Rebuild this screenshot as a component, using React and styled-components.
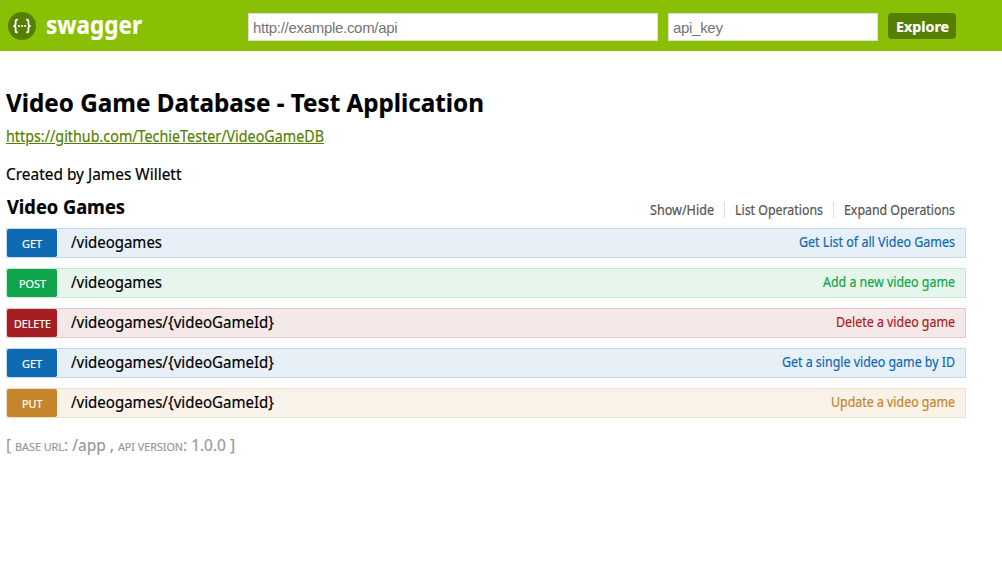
import React, { useLayoutEffect, useRef, useState } from "react";
import styled, { createGlobalStyle } from "styled-components";

const GlobalStyle = createGlobalStyle`
  * { box-sizing: border-box; }
  body { margin: 0; background: #fff; color: #000; font-family: "Droid Sans", "Noto Sans", sans-serif; }
  h1, h2, p, ul { margin: 0; padding: 0; }
  a { text-decoration: none; color: inherit; }
`;

const FitBox = styled.span`
  display: inline-block;
  width: ${(p) => p.$w}px;
  white-space: nowrap;
  text-align: left;
  text-decoration: inherit;
  vertical-align: baseline;
`;
const FitText = styled.span`
  display: inline-block;
  transform-origin: 0 50%;
  text-decoration: inherit;
  -webkit-text-stroke: 0.2px currentColor;
`;

// Condenses a text run horizontally so that it fills exactly w pixels.
function Fit({ w, children }) {
  const ref = useRef(null);
  const [scale, setScale] = useState(1);
  useLayoutEffect(() => {
    const natural = parseFloat(getComputedStyle(ref.current).width);
    if (natural) setScale(w / natural);
  }, [w, children]);
  return (
    <FitBox $w={w}>
      <FitText ref={ref} style={{ transform: `scaleX(${scale})` }}>
        {children}
      </FitText>
    </FitBox>
  );
}

const Header = styled.header`
  display: flex;
  align-items: flex-start;
  height: 51px;
  padding: 13px 46px 0 8px;
  background: #89bf04;
`;
const Brand = styled.a`
  display: flex;
  align-items: flex-start;
  width: 240px;
  height: 26px;
  gap: 10px;
`;
const BrandLogo = styled.svg`
  flex: none;
  margin-top: -1px;
`;
const BrandName = styled.span`
  margin-top: -1px;
  font-size: 25px;
  line-height: 24px;
  font-weight: 700;
  color: #fff;
`;
const Field = styled.input`
  width: ${(p) => p.$width}px;
  height: 28px;
  margin: 0 10px 0 0;
  padding: 0 4px;
  border: 1px solid #e0dede;
  outline: none;
  border-radius: 0;
  background: #fff;
  font: 15px "Liberation Sans", Arial, sans-serif;
  letter-spacing: -0.3px;
  &::placeholder { color: #757575; }
`;
const ExploreButton = styled.button`
  width: 68px;
  height: 26px;
  padding: 0 0 1px;
  border: 0;
  border-radius: 4px;
  background: #547f00;
  color: #fff;
  font: 700 15px/24px "Droid Sans", "Noto Sans", sans-serif;
  white-space: nowrap;
`;
const Main = styled.main`
  padding: 34px 36px 0 6px;
  white-space: nowrap;
`;
const Title = styled.h1`
  font-size: 25px;
  line-height: 34px;
  font-weight: 700;
`;
const RepoLink = styled.a`
  display: block;
  width: max-content;
  margin-top: 6px;
  font-size: 16px;
  line-height: 22px;
  && { color: #547f00; text-decoration: underline; }
`;
const Author = styled.p`
  margin-top: 16px;
  font-size: 16px;
  line-height: 22px;
`;
const ResourceHead = styled.div`
  display: flex;
  justify-content: space-between;
  height: 43px;
  padding: 8px 0 0 1px;
`;
const ResourceName = styled.h2`
  font-size: 19px;
  line-height: 28px;
`;
const Options = styled.ul`
  display: flex;
  list-style: none;
  padding: 9px 11px 0 0;
`;
const Option = styled.li`
  height: 16px;
  font-size: 13.5px;
  line-height: 16px;
  color: #555;
  & + & { margin-left: 10px; padding-left: 10px; border-left: 1px solid #ddd; }
`;
const Operations = styled.div`
  display: flex;
  flex-direction: column;
  gap: 10px;
`;
const Operation = styled.div`
  display: flex;
  height: 30px;
  border: 1px solid ${(p) => p.$c.border};
  background: ${(p) => p.$c.bg};
`;
const Method = styled.span`
  width: 50px;
  height: 28px;
  border-radius: 2px;
  background: ${(p) => p.$c.main};
  color: #fff;
  font-size: 11.3px;
  line-height: 30px;
  text-align: center;
`;
const Path = styled.span`
  flex: 1;
  padding-left: 14px;
  font-size: 16px;
  line-height: 26px;
`;
const Summary = styled.span`
  padding-right: 10px;
  font-size: 13.5px;
  line-height: 26px;
  color: ${(p) => p.$c.main};
`;
const Footer = styled.footer`
  display: flex;
  align-items: baseline;
  margin-top: 15px;
  font-size: 16px;
  line-height: 24px;
  color: #999;
`;
const SmallCaps = styled.span`
  margin: 0 0 0 4px;
  font-size: 11.5px;
  text-transform: uppercase;
`;

const tones = {
  get: { main: "#0f6ab4", bg: "#e7f0f7", border: "#c3d9ec" },
  post: { main: "#10a54a", bg: "#e7f6ec", border: "#c3e8d1" },
  delete: { main: "#a41e22", bg: "#f5e8e8", border: "#e8c6c7" },
  put: { main: "#c5862b", bg: "#f9f2e9", border: "#f0e0ca" },
};
const labelWidths = { get: 20, post: 27, delete: 37, put: 20.5 };
const operations = [
  ["get", "/videogames", 91, "Get List of all Video Games", 156],
  ["post", "/videogames", 91, "Add a new video game", 132],
  ["delete", "/videogames/{videoGameId}", 203, "Delete a video game", 119],
  ["get", "/videogames/{videoGameId}", 203, "Get a single video game by ID", 173],
  ["put", "/videogames/{videoGameId}", 203, "Update a video game", 124],
];

function Logo() {
  return (
    <BrandLogo width="28" height="28" viewBox="0 0 28 28">
      <circle cx="14" cy="14" r="14" fill="#547f00" />
      <g fill="none" stroke="#fff" strokeWidth="1.8">
        <path d="M9.8 7.6H9.3Q7.6 7.6 7.6 9.3V11.8Q7.6 14 5.4 14Q7.6 14 7.6 16.2V18.7Q7.6 20.4 9.3 20.4H9.8" />
        <path d="M18.2 7.6H18.7Q20.4 7.6 20.4 9.3V11.8Q20.4 14 22.6 14Q20.4 14 20.4 16.2V18.7Q20.4 20.4 18.7 20.4H18.2" />
      </g>
      <g fill="#fff">
        <circle cx="10.9" cy="14" r="1.1" />
        <circle cx="14" cy="14" r="1.1" />
        <circle cx="17.1" cy="14" r="1.1" />
      </g>
    </BrandLogo>
  );
}

export default function App() {
  return (
    <>
      <GlobalStyle />
      <Header>
        <Brand href="#">
          <Logo />
          <BrandName><Fit w={96}>swagger</Fit></BrandName>
        </Brand>
        <Field $width={410} placeholder="http://example.com/api" />
        <Field $width={210} placeholder="api_key" />
        <ExploreButton><Fit w={53}>Explore</Fit></ExploreButton>
      </Header>
      <Main>
        <Title><Fit w={478}>Video Game Database - Test Application</Fit></Title>
        <RepoLink href="#"><Fit w={318}>https://github.com/TechieTester/VideoGameDB</Fit></RepoLink>
        <Author><Fit w={175.5}>Created by James Willett</Fit></Author>
        <ResourceHead>
          <ResourceName><Fit w={118}>Video Games</Fit></ResourceName>
          <Options>
            <Option><Fit w={64}>Show/Hide</Fit></Option>
            <Option><Fit w={88}>List Operations</Fit></Option>
            <Option><Fit w={111}>Expand Operations</Fit></Option>
          </Options>
        </ResourceHead>
        <Operations>
          {operations.map(([method, path, pathWidth, summary, summaryWidth]) => (
            <Operation key={method + path} $c={tones[method]}>
              <Method $c={tones[method]}><Fit w={labelWidths[method]}>{method.toUpperCase()}</Fit></Method>
              <Path><Fit w={pathWidth}>{path}</Fit></Path>
              <Summary $c={tones[method]}><Fit w={summaryWidth}>{summary}</Fit></Summary>
            </Operation>
          ))}
        </Operations>
        <Footer>
          <span>[</span>
          <SmallCaps><Fit w={49}>base url</Fit></SmallCaps>
          <Fit w={50}>: /app ,</Fit>
          <SmallCaps><Fit w={65}>api version</Fit></SmallCaps>
          <Fit w={52}>: 1.0.0 ]</Fit>
        </Footer>
      </Main>
    </>
  );
}
